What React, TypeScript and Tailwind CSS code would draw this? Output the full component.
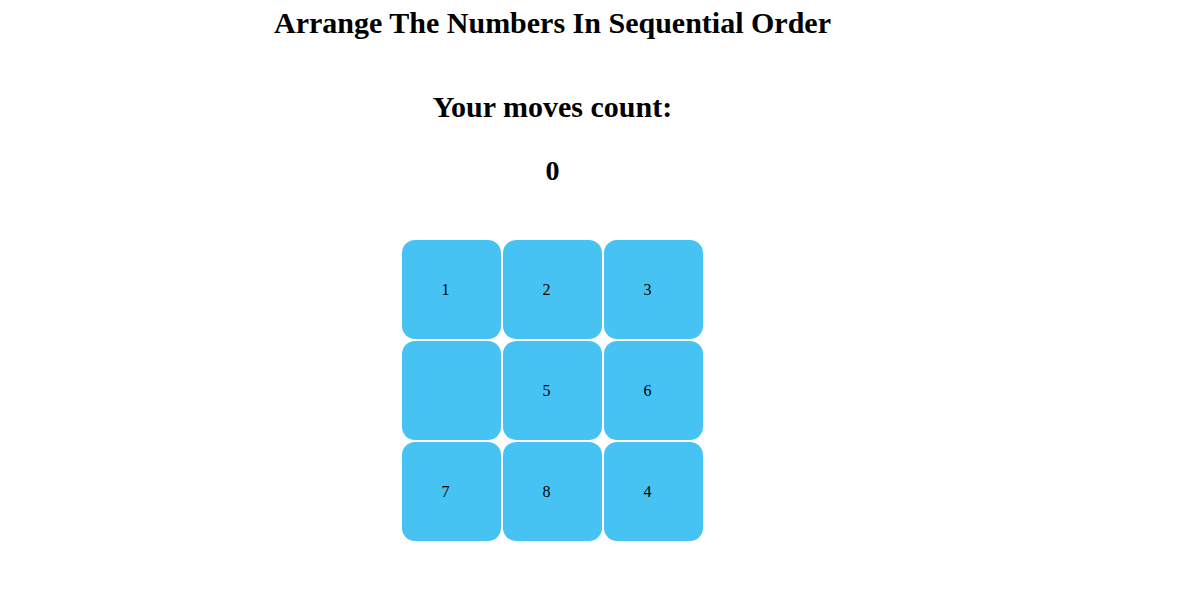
export default function App() {
  const tiles = ['1', '2', '3', '', '5', '6', '7', '8', '4'];
  return (
    <div className="min-h-screen bg-white" style={{ fontFamily: '"Liberation Serif", "Times New Roman", serif' }}>
      <div className="w-[1105px] flex flex-col items-center text-black">
        <h1 className="mt-[6px] text-[30px] font-bold leading-[34px]">Arrange The Numbers In Sequential Order</h1>
        <h2 className="mt-[50px] text-[30px] font-bold leading-[34px]">Your moves count:</h2>
        <div className="mt-[30px] text-[28px] font-bold leading-[34px]">0</div>
        <div className="mt-[52px] grid grid-cols-[repeat(3,99px)] gap-[2px]">
          {tiles.map((t, i) => (
            <div
              key={i}
              className="h-[99px] rounded-[13px] bg-[#47c3f3] flex items-center justify-center pr-3 text-[16px]"
            >
              {t}
            </div>
          ))}
        </div>
      </div>
    </div>
  );
}
